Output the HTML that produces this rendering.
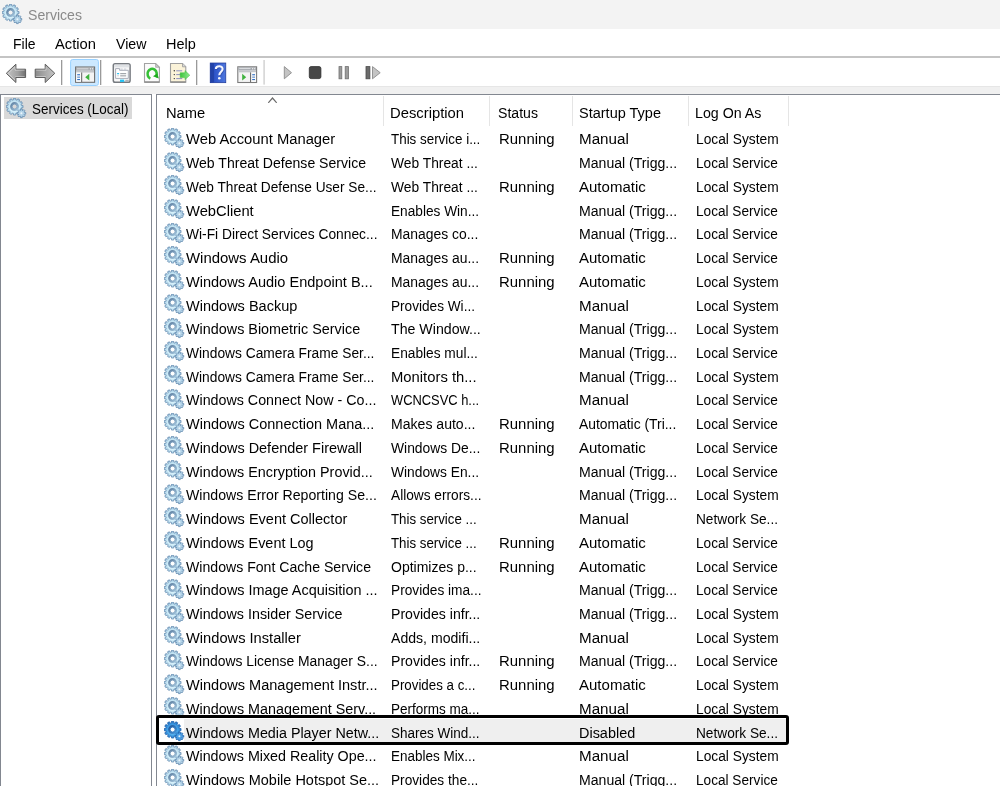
<!DOCTYPE html><html><head><meta charset="utf-8"><style>
*{margin:0;padding:0;box-sizing:border-box}
html,body{width:1000px;height:786px;overflow:hidden}
body{position:relative;font-family:"Liberation Sans",sans-serif;font-size:15.5px;color:#000}
.abs{position:absolute}
.t{position:absolute;white-space:pre;line-height:20px;transform-origin:0 0;margin-top:-15.3px}
.gi{position:absolute}
</style></head><body>
<svg width="0" height="0" style="position:absolute">
<defs>
<radialGradient id="gg" cx="0.5" cy="0.55" r="0.55"><stop offset="0" stop-color="#f6fcff"/><stop offset="0.5" stop-color="#d2eef9"/><stop offset="0.8" stop-color="#b4d8ec"/><stop offset="1" stop-color="#86adcc"/></radialGradient>
<radialGradient id="ggs" cx="0.5" cy="0.55" r="0.55"><stop offset="0" stop-color="#c8ecff"/><stop offset="0.5" stop-color="#4aa8ea"/><stop offset="0.8" stop-color="#2f88d6"/><stop offset="1" stop-color="#1f66b0"/></radialGradient>
<linearGradient id="gr" x1="0" y1="0" x2="1" y2="1"><stop offset="0" stop-color="#56779a"/><stop offset="1" stop-color="#a9cde4"/></linearGradient>
<linearGradient id="grs" x1="0" y1="0" x2="1" y2="1"><stop offset="0" stop-color="#1a4f95"/><stop offset="1" stop-color="#4a9de0"/></linearGradient>
<g id="gear">
<path d="M15.41,9.71 L17.03,9.71 L17.03,7.49 L15.41,7.49 L15.05,6.16 L16.45,5.35 L15.34,3.43 L13.94,4.23 L12.97,3.26 L13.77,1.86 L11.85,0.75 L11.04,2.15 L9.71,1.79 L9.71,0.17 L7.49,0.17 L7.49,1.79 L6.16,2.15 L5.35,0.75 L3.43,1.86 L4.23,3.26 L3.26,4.23 L1.86,3.43 L0.75,5.35 L2.15,6.16 L1.79,7.49 L0.17,7.49 L0.17,9.71 L1.79,9.71 L2.15,11.04 L0.75,11.85 L1.86,13.77 L3.26,12.97 L4.23,13.94 L3.43,15.34 L5.35,16.45 L6.16,15.05 L7.49,15.41 L7.49,17.03 L9.71,17.03 L9.71,15.41 L11.04,15.05 L11.85,16.45 L13.77,15.34 L12.97,13.94 L13.94,12.97 L15.34,13.77 L16.45,11.85 L15.05,11.04Z M11.10,8.60 A2.5,2.5 0 1 0 6.10,8.60 A2.5,2.5 0 1 0 11.10,8.60 Z" fill="url(#gg)" fill-rule="evenodd" stroke="#6a90b4" stroke-width="0.8"/>
<path d="M13.10,8.60 A4.5,4.5 0 1 0 4.10,8.60 A4.5,4.5 0 1 0 13.10,8.60 Z M11.10,8.60 A2.5,2.5 0 1 0 6.10,8.60 A2.5,2.5 0 1 0 11.10,8.60 Z" fill="url(#gr)" fill-rule="evenodd"/>
<path d="M18.38,16.16 L19.72,16.16 L19.72,14.44 L18.38,14.44 L18.11,13.80 L19.06,12.86 L17.84,11.64 L16.90,12.59 L16.26,12.32 L16.26,10.98 L14.54,10.98 L14.54,12.32 L13.90,12.59 L12.96,11.64 L11.74,12.86 L12.69,13.80 L12.42,14.44 L11.08,14.44 L11.08,16.16 L12.42,16.16 L12.69,16.80 L11.74,17.74 L12.96,18.96 L13.90,18.01 L14.54,18.28 L14.54,19.62 L16.26,19.62 L16.26,18.28 L16.90,18.01 L17.84,18.96 L19.06,17.74 L18.11,16.80Z" fill="#b3d3e8" stroke="#6189ae" stroke-width="0.8"/>
<circle cx="15.4" cy="15.3" r="1.0" fill="#eef6fb"/>
</g>
<g id="gearsel">
<path d="M15.41,9.71 L17.03,9.71 L17.03,7.49 L15.41,7.49 L15.05,6.16 L16.45,5.35 L15.34,3.43 L13.94,4.23 L12.97,3.26 L13.77,1.86 L11.85,0.75 L11.04,2.15 L9.71,1.79 L9.71,0.17 L7.49,0.17 L7.49,1.79 L6.16,2.15 L5.35,0.75 L3.43,1.86 L4.23,3.26 L3.26,4.23 L1.86,3.43 L0.75,5.35 L2.15,6.16 L1.79,7.49 L0.17,7.49 L0.17,9.71 L1.79,9.71 L2.15,11.04 L0.75,11.85 L1.86,13.77 L3.26,12.97 L4.23,13.94 L3.43,15.34 L5.35,16.45 L6.16,15.05 L7.49,15.41 L7.49,17.03 L9.71,17.03 L9.71,15.41 L11.04,15.05 L11.85,16.45 L13.77,15.34 L12.97,13.94 L13.94,12.97 L15.34,13.77 L16.45,11.85 L15.05,11.04Z M11.10,8.60 A2.5,2.5 0 1 0 6.10,8.60 A2.5,2.5 0 1 0 11.10,8.60 Z" fill="url(#ggs)" fill-rule="evenodd" stroke="#1f64b0" stroke-width="0.8"/>
<path d="M13.10,8.60 A4.5,4.5 0 1 0 4.10,8.60 A4.5,4.5 0 1 0 13.10,8.60 Z M11.10,8.60 A2.5,2.5 0 1 0 6.10,8.60 A2.5,2.5 0 1 0 11.10,8.60 Z" fill="url(#grs)" fill-rule="evenodd"/>
<path d="M18.38,16.16 L19.72,16.16 L19.72,14.44 L18.38,14.44 L18.11,13.80 L19.06,12.86 L17.84,11.64 L16.90,12.59 L16.26,12.32 L16.26,10.98 L14.54,10.98 L14.54,12.32 L13.90,12.59 L12.96,11.64 L11.74,12.86 L12.69,13.80 L12.42,14.44 L11.08,14.44 L11.08,16.16 L12.42,16.16 L12.69,16.80 L11.74,17.74 L12.96,18.96 L13.90,18.01 L14.54,18.28 L14.54,19.62 L16.26,19.62 L16.26,18.28 L16.90,18.01 L17.84,18.96 L19.06,17.74 L18.11,16.80Z" fill="#4c9fe4" stroke="#1f64b0" stroke-width="0.8"/>
<circle cx="15.4" cy="15.3" r="1.0" fill="#e6f3fd"/>
</g>
</defs></svg>

<div class="abs" style="left:0;top:0;width:1000px;height:29px;background:#f3f3f3"></div>
<svg class="gi" style="left:2px;top:4px" width="21" height="21" viewBox="0 0 21 21"><use href="#gear"/></svg>
<div class="abs" style="left:0;top:29px;width:1000px;height:27px;background:#fff"></div>
<div class="abs" style="left:0;top:56px;width:1000px;height:1.5px;background:#c4c4c4"></div>
<div class="abs" style="left:0;top:57.5px;width:1000px;height:28.8px;background:#fff"></div>
<div class="abs" style="left:0;top:86.3px;width:1000px;height:7.7px;background:#f0f0f0;border-top:1px solid #e6e6e6"></div>
<svg class="abs" style="left:0;top:57px" width="400" height="30" viewBox="0 57 400 30">
<defs>
<linearGradient id="arrg" x1="0" y1="0" x2="0" y2="1"><stop offset="0" stop-color="#c9c9c9"/><stop offset="0.5" stop-color="#9a9a9a"/><stop offset="1" stop-color="#b5b5b5"/></linearGradient>
<linearGradient id="arrh" x1="0" y1="0" x2="1" y2="0"><stop offset="0" stop-color="#c4c4c4"/><stop offset="0.6" stop-color="#a0a0a0"/><stop offset="1" stop-color="#707070"/></linearGradient><linearGradient id="arrh2" x1="0" y1="0" x2="1" y2="0"><stop offset="0" stop-color="#8a8a8a"/><stop offset="0.5" stop-color="#a8a8a8"/><stop offset="1" stop-color="#c4c4c4"/></linearGradient>
<linearGradient id="helpg" x1="0" y1="0" x2="1" y2="0"><stop offset="0" stop-color="#1c3ca8"/><stop offset="0.3" stop-color="#2e55c9"/><stop offset="1" stop-color="#4f78de"/></linearGradient>
<linearGradient id="expg" x1="0" y1="0" x2="1" y2="0"><stop offset="0" stop-color="#3cc43c"/><stop offset="1" stop-color="#8ee88e"/></linearGradient>
</defs>
<!-- back arrow -->
<path d="M6.3,73.3 L15.9,64.2 L15.9,69.2 L25.6,69.2 L25.6,77.5 L15.9,77.5 L15.9,82.5 Z" fill="url(#arrh)" stroke="#5e5e5e" stroke-width="1" stroke-linejoin="round"/>
<path d="M8.2,73.3 L15,66.8 L15,70.2 L24.5,70.2 M15,80 L8.6,73.6" fill="none" stroke="#e2e2e2" stroke-width="0.8" opacity="0.7"/>
<path d="M15.2,76.5 L24.6,76.5" fill="none" stroke="#d0d0d0" stroke-width="0.8" opacity="0.8"/>
<path d="M35.2,69.2 L45.2,69.2 L45.2,64.2 L54.8,73.3 L45.2,82.5 L45.2,77.5 L35.2,77.5 Z" fill="url(#arrh2)" stroke="#5e5e5e" stroke-width="1" stroke-linejoin="round"/>
<path d="M36.2,70.2 L46,70.2 L46,66.8 M36.2,76.5 L45.8,76.5" fill="none" stroke="#e2e2e2" stroke-width="0.8" opacity="0.7"/>
<rect x="61" y="60" width="1.3" height="25" fill="#9a9a9a"/>
<!-- highlighted button -->
<rect x="70.6" y="59.5" width="27.8" height="26" rx="2" fill="#cce8ff" stroke="#99d1ff" stroke-width="1"/>
<rect x="75.6" y="67" width="19" height="15.3" fill="#f4f4f4" stroke="#6e6e6e" stroke-width="1.1"/>
<rect x="76.15" y="67.55" width="17.9" height="3.1" fill="#a4a8ae"/>
<rect x="77" y="68.4" width="11.5" height="0.9" fill="#e6e8ea"/>
<rect x="89.8" y="68.2" width="1.2" height="1.2" fill="#f0f0f0"/>
<rect x="91.9" y="68.2" width="1.2" height="1.2" fill="#f0f0f0"/>
<rect x="76.15" y="70.65" width="17.9" height="1.9" fill="#c3c6ca"/>
<rect x="76.15" y="72.55" width="4.9" height="9.2" fill="#fafafa"/>
<rect x="81.1" y="72.5" width="1.1" height="9.5" fill="#6e6e6e"/>
<rect x="77.2" y="74.2" width="2.8" height="1.1" fill="#2f6fc4"/>
<rect x="77.2" y="76.6" width="2.8" height="1.1" fill="#5588cc"/>
<rect x="77.2" y="79.0" width="2.8" height="1.1" fill="#2f6fc4"/>
<path d="M89.3,73.8 L85.2,77.2 L89.3,80.6 Z" fill="#3fb23f"/>
<rect x="100" y="60" width="1.3" height="25" fill="#9a9a9a"/>
<!-- properties -->
<rect x="113.3" y="63.8" width="16.8" height="18.4" rx="1.8" fill="#f8f8f8" stroke="#777b80" stroke-width="1.5"/>
<rect x="114.2" y="64.6" width="15" height="2.8" fill="#dfe2e5"/>
<path d="M115.6,78.4 L115.6,68.6 L119.6,68.6 L119.6,70.3 L128.3,70.3 L128.3,78.4 Z" fill="#fff" stroke="#a9adb8" stroke-width="1"/>
<rect x="120.5" y="68.6" width="2.2" height="1.1" fill="#c9ccd6"/>
<rect x="124" y="68.6" width="2.2" height="1.1" fill="#c9ccd6"/>
<rect x="117" y="73" width="2.2" height="1.3" rx="0.6" fill="#25c0f2"/>
<rect x="120.2" y="73.1" width="6" height="1.1" fill="#9a9ea4"/>
<rect x="120.2" y="75.3" width="6" height="1.1" fill="#9a9ea4"/>
<rect x="117.3" y="75.3" width="1.4" height="1" fill="#c0c0c0"/>
<rect x="120" y="79.6" width="4.2" height="2.3" fill="#22c2f4"/>
<rect x="125.3" y="79.8" width="3.5" height="2" fill="#b0b3b6"/>
<!-- refresh page -->
<path d="M144.5,63.5 L155.6,63.5 L159.4,67.3 L159.4,82.2 L144.5,82.2 Z" fill="#fbfbfb" stroke="#a2a2a2" stroke-width="1.1"/>
<rect x="144.5" y="81.4" width="14.9" height="1.2" fill="#7e7e7e"/>
<path d="M155.6,63.5 L155.6,67.3 L159.4,67.3 Z" fill="#c8c8c8" stroke="#a0a0a0" stroke-width="0.7"/>
<path d="M150.3,78.6 A4.6,5.1 0 1 1 155.8,77.0" fill="none" stroke="#35c035" stroke-width="2.6"/>
<path d="M153.0,76.2 L158.8,78.6 L157.3,73.6 Z" fill="#1caa1c"/>
<!-- export list -->
<path d="M170.5,63.5 L182.5,63.5 L185.8,66.8 L185.8,82.3 L170.5,82.3 Z" fill="#fbf3d9" stroke="#a0a0a0" stroke-width="1.1"/>
<rect x="170.5" y="81.4" width="15.3" height="1.2" fill="#7e7e7e"/>
<path d="M182.5,63.5 L182.5,66.8 L185.8,66.8" fill="#d8d8d8" stroke="#9a9a9a" stroke-width="0.8"/>
<circle cx="174.3" cy="70.8" r="0.7" fill="#333"/>
<circle cx="174.3" cy="74.6" r="0.7" fill="#333"/>
<circle cx="174.3" cy="78.6" r="0.7" fill="#333"/>
<rect x="176.2" y="70.3" width="6" height="1" fill="#8d90c0"/>
<rect x="176.2" y="74.1" width="6" height="1" fill="#8d90c0"/>
<rect x="176.2" y="78.1" width="6" height="1" fill="#8d90c0"/>
<path d="M180.2,72.8 L185,72.8 L185,70.6 L189.8,75.2 L185,79.6 L185,77.6 L180.2,77.6 Z" fill="url(#expg)" stroke="#3cbc3c" stroke-width="0.5"/>
<rect x="196" y="60" width="1.3" height="25" fill="#9a9a9a"/>
<!-- help -->
<rect x="210.2" y="63" width="15.6" height="19.7" fill="url(#helpg)" stroke="#1b3596" stroke-width="0.7"/>
<rect x="210.5" y="63.3" width="3.4" height="19.1" fill="#2242a8"/>
<path d="M215.9,68.9 C215.9,65.6 222.6,65.2 222.6,69.0 C222.6,71.8 219.3,72.0 219.3,75.3" fill="none" stroke="#1b3080" stroke-width="2.3" opacity="0.45" transform="translate(0.7,0.6)"/>
<path d="M215.9,68.9 C215.9,65.6 222.6,65.2 222.6,69.0 C222.6,71.8 219.3,72.0 219.3,75.3" fill="none" stroke="#f4f6ff" stroke-width="2.1"/>
<circle cx="219.3" cy="78.3" r="1.3" fill="#f4f6ff"/>
<!-- console -->
<rect x="237.8" y="66.8" width="18.8" height="15.7" fill="#f4f4f4" stroke="#7b7b7b" stroke-width="1.1"/>
<rect x="238.35" y="67.35" width="17.7" height="3.1" fill="#a4a8ae"/>
<rect x="239.2" y="68.2" width="11.3" height="0.9" fill="#e6e8ea"/>
<rect x="252" y="68.1" width="1.2" height="1.2" fill="#f0f0f0"/>
<rect x="254.1" y="68.1" width="1.2" height="1.2" fill="#f0f0f0"/>
<rect x="238.35" y="70.45" width="17.7" height="1.9" fill="#c3c6ca"/>
<rect x="250.9" y="72.4" width="5.1" height="9.5" fill="#fafafa"/>
<rect x="250" y="72.4" width="1.1" height="9.6" fill="#6e6e6e"/>
<rect x="252.2" y="74.2" width="2.8" height="1.1" fill="#2f6fc4"/>
<rect x="252.2" y="76.6" width="2.8" height="1.1" fill="#5588cc"/>
<rect x="252.2" y="79.0" width="2.8" height="1.1" fill="#2f6fc4"/>
<path d="M242.2,73.8 L246.2,77.2 L242.2,80.6 Z" fill="#3fb23f"/>
<rect x="263.4" y="60" width="1.4" height="24.6" fill="#d0d0d0"/>
<!-- play -->
<path d="M284.3,66.6 L291.5,72.7 L284.3,78.8 Z" fill="#c4c4c4" stroke="#8c8c8c" stroke-width="0.9" stroke-linejoin="round"/>
<!-- stop -->
<rect x="309.3" y="66.6" width="11.6" height="12" rx="1.8" fill="#474747" stroke="#2e2e2e" stroke-width="0.8"/>
<!-- pause -->
<rect x="339" y="66.6" width="2.8" height="12.2" fill="#9c9c9c" stroke="#707070" stroke-width="0.8"/>
<rect x="345.2" y="66.6" width="3.2" height="12.2" fill="#9c9c9c" stroke="#707070" stroke-width="0.8"/>
<!-- restart -->
<rect x="366" y="66.6" width="3.9" height="12.2" fill="#6b6b6b" stroke="#4a4a4a" stroke-width="0.8"/>
<path d="M372.5,66.6 L380.2,72.7 L372.5,78.8 Z" fill="#c4c4c4" stroke="#8c8c8c" stroke-width="0.9" stroke-linejoin="round"/>
</svg>

<div class="abs" style="left:0;top:94px;width:152.2px;height:700px;border:1.25px solid #828790;border-bottom:none;background:#fff"></div>
<div class="abs" style="left:4px;top:96.7px;width:128px;height:22px;background:#d9d9d9"></div>
<svg class="gi" style="left:6px;top:98px" width="21" height="21" viewBox="0 0 21 21"><use href="#gear"/></svg>
<div class="abs" style="left:156px;top:94px;width:850px;height:700px;border:1.25px solid #828790;border-right:none;border-bottom:none;background:#fff"></div>
<div class="abs" style="left:382.80px;top:96.4px;width:1.25px;height:30px;background:#e5e5e5"></div>
<div class="abs" style="left:489.00px;top:96.4px;width:1.25px;height:30px;background:#e5e5e5"></div>
<div class="abs" style="left:572.20px;top:96.4px;width:1.25px;height:30px;background:#e5e5e5"></div>
<div class="abs" style="left:688.00px;top:96.4px;width:1.25px;height:30px;background:#e5e5e5"></div>
<div class="abs" style="left:788.20px;top:96.4px;width:1.25px;height:30px;background:#e5e5e5"></div>
<svg class="abs" style="left:267px;top:96px" width="11" height="7" viewBox="0 0 11 7"><path d="M1.3,6.8 L5.5,2 L9.7,6.8" fill="none" stroke="#6a6a6a" stroke-width="1.2"/></svg>
<div class="abs" style="left:184px;top:719px;width:602px;height:23px;background:#efefef"></div>
<svg class="gi" style="left:163.6px;top:127.8px" width="21" height="21" viewBox="0 0 21 21"><use href="#gear"/></svg>
<svg class="gi" style="left:163.6px;top:151.53px" width="21" height="21" viewBox="0 0 21 21"><use href="#gear"/></svg>
<svg class="gi" style="left:163.6px;top:175.26px" width="21" height="21" viewBox="0 0 21 21"><use href="#gear"/></svg>
<svg class="gi" style="left:163.6px;top:198.99px" width="21" height="21" viewBox="0 0 21 21"><use href="#gear"/></svg>
<svg class="gi" style="left:163.6px;top:222.72px" width="21" height="21" viewBox="0 0 21 21"><use href="#gear"/></svg>
<svg class="gi" style="left:163.6px;top:246.45px" width="21" height="21" viewBox="0 0 21 21"><use href="#gear"/></svg>
<svg class="gi" style="left:163.6px;top:270.18px" width="21" height="21" viewBox="0 0 21 21"><use href="#gear"/></svg>
<svg class="gi" style="left:163.6px;top:293.91px" width="21" height="21" viewBox="0 0 21 21"><use href="#gear"/></svg>
<svg class="gi" style="left:163.6px;top:317.64px" width="21" height="21" viewBox="0 0 21 21"><use href="#gear"/></svg>
<svg class="gi" style="left:163.6px;top:341.37px" width="21" height="21" viewBox="0 0 21 21"><use href="#gear"/></svg>
<svg class="gi" style="left:163.6px;top:365.1px" width="21" height="21" viewBox="0 0 21 21"><use href="#gear"/></svg>
<svg class="gi" style="left:163.6px;top:388.83px" width="21" height="21" viewBox="0 0 21 21"><use href="#gear"/></svg>
<svg class="gi" style="left:163.6px;top:412.56px" width="21" height="21" viewBox="0 0 21 21"><use href="#gear"/></svg>
<svg class="gi" style="left:163.6px;top:436.29px" width="21" height="21" viewBox="0 0 21 21"><use href="#gear"/></svg>
<svg class="gi" style="left:163.6px;top:460.02px" width="21" height="21" viewBox="0 0 21 21"><use href="#gear"/></svg>
<svg class="gi" style="left:163.6px;top:483.75px" width="21" height="21" viewBox="0 0 21 21"><use href="#gear"/></svg>
<svg class="gi" style="left:163.6px;top:507.48px" width="21" height="21" viewBox="0 0 21 21"><use href="#gear"/></svg>
<svg class="gi" style="left:163.6px;top:531.21px" width="21" height="21" viewBox="0 0 21 21"><use href="#gear"/></svg>
<svg class="gi" style="left:163.6px;top:554.94px" width="21" height="21" viewBox="0 0 21 21"><use href="#gear"/></svg>
<svg class="gi" style="left:163.6px;top:578.67px" width="21" height="21" viewBox="0 0 21 21"><use href="#gear"/></svg>
<svg class="gi" style="left:163.6px;top:602.4px" width="21" height="21" viewBox="0 0 21 21"><use href="#gear"/></svg>
<svg class="gi" style="left:163.6px;top:626.13px" width="21" height="21" viewBox="0 0 21 21"><use href="#gear"/></svg>
<svg class="gi" style="left:163.6px;top:649.86px" width="21" height="21" viewBox="0 0 21 21"><use href="#gear"/></svg>
<svg class="gi" style="left:163.6px;top:673.59px" width="21" height="21" viewBox="0 0 21 21"><use href="#gear"/></svg>
<svg class="gi" style="left:163.6px;top:697.32px" width="21" height="21" viewBox="0 0 21 21"><use href="#gear"/></svg>
<svg class="gi" style="left:163.6px;top:721.05px" width="21" height="21" viewBox="0 0 21 21"><use href="#gearsel"/></svg>
<svg class="gi" style="left:163.6px;top:744.78px" width="21" height="21" viewBox="0 0 21 21"><use href="#gear"/></svg>
<svg class="gi" style="left:163.6px;top:768.51px" width="21" height="21" viewBox="0 0 21 21"><use href="#gear"/></svg>
<div style="position:absolute;left:0;top:0;width:1000px;height:786px;will-change:transform"><span class="t" style="left:28.20px;top:19.80px;transform:scaleX(0.9085);color:#8a8a8a;">Services</span><span class="t" style="left:13.00px;top:49.00px;transform:scaleX(0.9006);">File</span><span class="t" style="left:55.00px;top:49.00px;transform:scaleX(0.9514);">Action</span><span class="t" style="left:116.00px;top:49.00px;transform:scaleX(0.9151);">View</span><span class="t" style="left:165.50px;top:49.00px;transform:scaleX(0.9344);">Help</span><span class="t" style="left:31.60px;top:114.30px;transform:scaleX(0.8684);">Services (Local)</span><span class="t" style="left:165.80px;top:117.80px;transform:scaleX(0.9478);">Name</span><span class="t" style="left:390.00px;top:117.80px;transform:scaleX(0.9545);">Description</span><span class="t" style="left:498.40px;top:117.80px;transform:scaleX(0.9101);">Status</span><span class="t" style="left:579.40px;top:117.80px;transform:scaleX(0.9360);">Startup Type</span><span class="t" style="left:695.20px;top:117.80px;transform:scaleX(0.9172);">Log On As</span><span class="t" style="left:186.40px;top:144.70px;transform:scaleX(0.9532);">Web Account Manager</span><span class="t" style="left:390.80px;top:144.70px;transform:scaleX(0.8640);">This service i...</span><span class="t" style="left:498.60px;top:144.70px;transform:scaleX(0.9628);">Running</span><span class="t" style="left:579.40px;top:144.70px;transform:scaleX(0.9795);">Manual</span><span class="t" style="left:695.60px;top:144.70px;transform:scaleX(0.8877);">Local System</span><span class="t" style="left:186.40px;top:168.43px;transform:scaleX(0.9070);">Web Threat Defense Service</span><span class="t" style="left:390.80px;top:168.43px;transform:scaleX(0.8900);">Web Threat ...</span><span class="t" style="left:579.40px;top:168.43px;transform:scaleX(0.9086);">Manual (Trigg...</span><span class="t" style="left:695.60px;top:168.43px;transform:scaleX(0.8791);">Local Service</span><span class="t" style="left:186.40px;top:192.16px;transform:scaleX(0.8833);">Web Threat Defense User Se...</span><span class="t" style="left:390.80px;top:192.16px;transform:scaleX(0.8900);">Web Threat ...</span><span class="t" style="left:498.60px;top:192.16px;transform:scaleX(0.9628);">Running</span><span class="t" style="left:579.40px;top:192.16px;transform:scaleX(0.9692);">Automatic</span><span class="t" style="left:695.60px;top:192.16px;transform:scaleX(0.8877);">Local System</span><span class="t" style="left:186.40px;top:215.89px;transform:scaleX(0.9506);">WebClient</span><span class="t" style="left:390.80px;top:215.89px;transform:scaleX(0.8816);">Enables Win...</span><span class="t" style="left:579.40px;top:215.89px;transform:scaleX(0.9086);">Manual (Trigg...</span><span class="t" style="left:695.60px;top:215.89px;transform:scaleX(0.8791);">Local Service</span><span class="t" style="left:186.40px;top:239.62px;transform:scaleX(0.8893);">Wi-Fi Direct Services Connec...</span><span class="t" style="left:390.80px;top:239.62px;transform:scaleX(0.8967);">Manages co...</span><span class="t" style="left:579.40px;top:239.62px;transform:scaleX(0.9086);">Manual (Trigg...</span><span class="t" style="left:695.60px;top:239.62px;transform:scaleX(0.8791);">Local Service</span><span class="t" style="left:186.40px;top:263.35px;transform:scaleX(0.9633);">Windows Audio</span><span class="t" style="left:390.80px;top:263.35px;transform:scaleX(0.8968);">Manages au...</span><span class="t" style="left:498.60px;top:263.35px;transform:scaleX(0.9628);">Running</span><span class="t" style="left:579.40px;top:263.35px;transform:scaleX(0.9692);">Automatic</span><span class="t" style="left:695.60px;top:263.35px;transform:scaleX(0.8791);">Local Service</span><span class="t" style="left:186.40px;top:287.08px;transform:scaleX(0.9380);">Windows Audio Endpoint B...</span><span class="t" style="left:390.80px;top:287.08px;transform:scaleX(0.8968);">Manages au...</span><span class="t" style="left:498.60px;top:287.08px;transform:scaleX(0.9628);">Running</span><span class="t" style="left:579.40px;top:287.08px;transform:scaleX(0.9692);">Automatic</span><span class="t" style="left:695.60px;top:287.08px;transform:scaleX(0.8877);">Local System</span><span class="t" style="left:186.40px;top:310.81px;transform:scaleX(0.9362);">Windows Backup</span><span class="t" style="left:390.80px;top:310.81px;transform:scaleX(0.8786);">Provides Wi...</span><span class="t" style="left:579.40px;top:310.81px;transform:scaleX(0.9795);">Manual</span><span class="t" style="left:695.60px;top:310.81px;transform:scaleX(0.8877);">Local System</span><span class="t" style="left:186.40px;top:334.54px;transform:scaleX(0.9277);">Windows Biometric Service</span><span class="t" style="left:390.80px;top:334.54px;transform:scaleX(0.9143);">The Window...</span><span class="t" style="left:579.40px;top:334.54px;transform:scaleX(0.9086);">Manual (Trigg...</span><span class="t" style="left:695.60px;top:334.54px;transform:scaleX(0.8877);">Local System</span><span class="t" style="left:186.40px;top:358.27px;transform:scaleX(0.8891);">Windows Camera Frame Ser...</span><span class="t" style="left:390.80px;top:358.27px;transform:scaleX(0.8848);">Enables mul...</span><span class="t" style="left:579.40px;top:358.27px;transform:scaleX(0.9086);">Manual (Trigg...</span><span class="t" style="left:695.60px;top:358.27px;transform:scaleX(0.8791);">Local Service</span><span class="t" style="left:186.40px;top:382.00px;transform:scaleX(0.8891);">Windows Camera Frame Ser...</span><span class="t" style="left:390.80px;top:382.00px;transform:scaleX(0.9554);">Monitors th...</span><span class="t" style="left:579.40px;top:382.00px;transform:scaleX(0.9086);">Manual (Trigg...</span><span class="t" style="left:695.60px;top:382.00px;transform:scaleX(0.8877);">Local System</span><span class="t" style="left:186.40px;top:405.73px;transform:scaleX(0.9209);">Windows Connect Now - Co...</span><span class="t" style="left:390.80px;top:405.73px;transform:scaleX(0.8316);">WCNCSVC h...</span><span class="t" style="left:579.40px;top:405.73px;transform:scaleX(0.9795);">Manual</span><span class="t" style="left:695.60px;top:405.73px;transform:scaleX(0.8791);">Local Service</span><span class="t" style="left:186.40px;top:429.46px;transform:scaleX(0.9345);">Windows Connection Mana...</span><span class="t" style="left:390.80px;top:429.46px;transform:scaleX(0.9071);">Makes auto...</span><span class="t" style="left:498.60px;top:429.46px;transform:scaleX(0.9628);">Running</span><span class="t" style="left:579.40px;top:429.46px;transform:scaleX(0.8942);">Automatic (Tri...</span><span class="t" style="left:695.60px;top:429.46px;transform:scaleX(0.8791);">Local Service</span><span class="t" style="left:186.40px;top:453.19px;transform:scaleX(0.9324);">Windows Defender Firewall</span><span class="t" style="left:390.80px;top:453.19px;transform:scaleX(0.8937);">Windows De...</span><span class="t" style="left:498.60px;top:453.19px;transform:scaleX(0.9628);">Running</span><span class="t" style="left:579.40px;top:453.19px;transform:scaleX(0.9692);">Automatic</span><span class="t" style="left:695.60px;top:453.19px;transform:scaleX(0.8791);">Local Service</span><span class="t" style="left:186.40px;top:476.92px;transform:scaleX(0.9262);">Windows Encryption Provid...</span><span class="t" style="left:390.80px;top:476.92px;transform:scaleX(0.8893);">Windows En...</span><span class="t" style="left:579.40px;top:476.92px;transform:scaleX(0.9086);">Manual (Trigg...</span><span class="t" style="left:695.60px;top:476.92px;transform:scaleX(0.8791);">Local Service</span><span class="t" style="left:186.40px;top:500.65px;transform:scaleX(0.9115);">Windows Error Reporting Se...</span><span class="t" style="left:390.80px;top:500.65px;transform:scaleX(0.8829);">Allows errors...</span><span class="t" style="left:579.40px;top:500.65px;transform:scaleX(0.9086);">Manual (Trigg...</span><span class="t" style="left:695.60px;top:500.65px;transform:scaleX(0.8877);">Local System</span><span class="t" style="left:186.40px;top:524.38px;transform:scaleX(0.9362);">Windows Event Collector</span><span class="t" style="left:390.80px;top:524.38px;transform:scaleX(0.8567);">This service ...</span><span class="t" style="left:579.40px;top:524.38px;transform:scaleX(0.9795);">Manual</span><span class="t" style="left:695.60px;top:524.38px;transform:scaleX(0.8814);">Network Se...</span><span class="t" style="left:186.40px;top:548.11px;transform:scaleX(0.9307);">Windows Event Log</span><span class="t" style="left:390.80px;top:548.11px;transform:scaleX(0.8567);">This service ...</span><span class="t" style="left:498.60px;top:548.11px;transform:scaleX(0.9628);">Running</span><span class="t" style="left:579.40px;top:548.11px;transform:scaleX(0.9692);">Automatic</span><span class="t" style="left:695.60px;top:548.11px;transform:scaleX(0.8791);">Local Service</span><span class="t" style="left:186.40px;top:571.84px;transform:scaleX(0.9099);">Windows Font Cache Service</span><span class="t" style="left:390.80px;top:571.84px;transform:scaleX(0.9034);">Optimizes p...</span><span class="t" style="left:498.60px;top:571.84px;transform:scaleX(0.9628);">Running</span><span class="t" style="left:579.40px;top:571.84px;transform:scaleX(0.9692);">Automatic</span><span class="t" style="left:695.60px;top:571.84px;transform:scaleX(0.8791);">Local Service</span><span class="t" style="left:186.40px;top:595.57px;transform:scaleX(0.9305);">Windows Image Acquisition ...</span><span class="t" style="left:390.80px;top:595.57px;transform:scaleX(0.8828);">Provides ima...</span><span class="t" style="left:579.40px;top:595.57px;transform:scaleX(0.9086);">Manual (Trigg...</span><span class="t" style="left:695.60px;top:595.57px;transform:scaleX(0.8791);">Local Service</span><span class="t" style="left:186.40px;top:619.30px;transform:scaleX(0.9222);">Windows Insider Service</span><span class="t" style="left:390.80px;top:619.30px;transform:scaleX(0.9092);">Provides infr...</span><span class="t" style="left:579.40px;top:619.30px;transform:scaleX(0.9086);">Manual (Trigg...</span><span class="t" style="left:695.60px;top:619.30px;transform:scaleX(0.8877);">Local System</span><span class="t" style="left:186.40px;top:643.03px;transform:scaleX(0.9459);">Windows Installer</span><span class="t" style="left:390.80px;top:643.03px;transform:scaleX(0.9092);">Adds, modifi...</span><span class="t" style="left:579.40px;top:643.03px;transform:scaleX(0.9795);">Manual</span><span class="t" style="left:695.60px;top:643.03px;transform:scaleX(0.8877);">Local System</span><span class="t" style="left:186.40px;top:666.76px;transform:scaleX(0.8968);">Windows License Manager S...</span><span class="t" style="left:390.80px;top:666.76px;transform:scaleX(0.9092);">Provides infr...</span><span class="t" style="left:498.60px;top:666.76px;transform:scaleX(0.9628);">Running</span><span class="t" style="left:579.40px;top:666.76px;transform:scaleX(0.9086);">Manual (Trigg...</span><span class="t" style="left:695.60px;top:666.76px;transform:scaleX(0.8791);">Local Service</span><span class="t" style="left:186.40px;top:690.49px;transform:scaleX(0.9384);">Windows Management Instr...</span><span class="t" style="left:390.80px;top:690.49px;transform:scaleX(0.8593);">Provides a c...</span><span class="t" style="left:498.60px;top:690.49px;transform:scaleX(0.9628);">Running</span><span class="t" style="left:579.40px;top:690.49px;transform:scaleX(0.9692);">Automatic</span><span class="t" style="left:695.60px;top:690.49px;transform:scaleX(0.8877);">Local System</span><span class="t" style="left:186.40px;top:714.22px;transform:scaleX(0.9246);">Windows Management Serv...</span><span class="t" style="left:390.80px;top:714.22px;transform:scaleX(0.8717);">Performs ma...</span><span class="t" style="left:579.40px;top:714.22px;transform:scaleX(0.9795);">Manual</span><span class="t" style="left:695.60px;top:714.22px;transform:scaleX(0.8877);">Local System</span><span class="t" style="left:186.40px;top:737.95px;transform:scaleX(0.9225);">Windows Media Player Netw...</span><span class="t" style="left:390.80px;top:737.95px;transform:scaleX(0.8716);">Shares Wind...</span><span class="t" style="left:579.40px;top:737.95px;transform:scaleX(0.9318);">Disabled</span><span class="t" style="left:695.60px;top:737.95px;transform:scaleX(0.8814);">Network Se...</span><span class="t" style="left:186.40px;top:761.68px;transform:scaleX(0.9214);">Windows Mixed Reality Ope...</span><span class="t" style="left:390.80px;top:761.68px;transform:scaleX(0.8689);">Enables Mix...</span><span class="t" style="left:579.40px;top:761.68px;transform:scaleX(0.9795);">Manual</span><span class="t" style="left:695.60px;top:761.68px;transform:scaleX(0.8877);">Local System</span><span class="t" style="left:186.40px;top:785.41px;transform:scaleX(0.9339);">Windows Mobile Hotspot Se...</span><span class="t" style="left:390.80px;top:785.41px;transform:scaleX(0.8821);">Provides the...</span><span class="t" style="left:579.40px;top:785.41px;transform:scaleX(0.9086);">Manual (Trigg...</span><span class="t" style="left:695.60px;top:785.41px;transform:scaleX(0.8791);">Local Service</span></div>
<div class="abs" style="left:156.3px;top:714.8px;width:632.9px;height:30.1px;border:3.6px solid #000;border-radius:3px"></div>
</body></html>
